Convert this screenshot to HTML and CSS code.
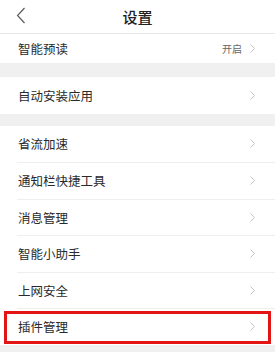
FILE: index.html
```html
<!DOCTYPE html>
<html lang="zh-CN">
<head>
    <meta charset="UTF-8">
    <meta name="viewport" content="width=device-width, initial-scale=1.0">
    <title>设置</title>
    <link rel="stylesheet" href="styles.css">
</head>
<body>

    <div class="topbar">
        <svg class="back" width="10" height="17" viewBox="0 0 10 17">
            <path d="M8.5 1 L1.5 8.5 L8.5 16" fill="none" stroke="#555" stroke-width="1.1"/>
        </svg>
        <span class="title">设置</span>
    </div>

    <div class="group first">
        <div class="row short">
            <span class="label">智能预读</span>
            <span class="value">开启</span>
            <svg class="arrow" width="5" height="9" viewBox="0 0 5 9"><path d="M0.5 0.5 L4.5 4.5 L0.5 8.5" fill="none" stroke="#c4c4c4" stroke-width="1"/></svg>
        </div>
    </div>

    <div class="group">
        <div class="row">
            <span class="label">自动安装应用</span>
            <svg class="arrow" width="5" height="9" viewBox="0 0 5 9"><path d="M0.5 0.5 L4.5 4.5 L0.5 8.5" fill="none" stroke="#c4c4c4" stroke-width="1"/></svg>
        </div>
    </div>

    <div class="group">
        <div class="row">
            <span class="label">省流加速</span>
            <svg class="arrow" width="5" height="9" viewBox="0 0 5 9"><path d="M0.5 0.5 L4.5 4.5 L0.5 8.5" fill="none" stroke="#c4c4c4" stroke-width="1"/></svg>
        </div>
        <div class="row">
            <span class="label">通知栏快捷工具</span>
            <svg class="arrow" width="5" height="9" viewBox="0 0 5 9"><path d="M0.5 0.5 L4.5 4.5 L0.5 8.5" fill="none" stroke="#c4c4c4" stroke-width="1"/></svg>
        </div>
        <div class="row">
            <span class="label">消息管理</span>
            <svg class="arrow" width="5" height="9" viewBox="0 0 5 9"><path d="M0.5 0.5 L4.5 4.5 L0.5 8.5" fill="none" stroke="#c4c4c4" stroke-width="1"/></svg>
        </div>
        <div class="row">
            <span class="label">智能小助手</span>
            <svg class="arrow" width="5" height="9" viewBox="0 0 5 9"><path d="M0.5 0.5 L4.5 4.5 L0.5 8.5" fill="none" stroke="#c4c4c4" stroke-width="1"/></svg>
        </div>
        <div class="row">
            <span class="label">上网安全</span>
            <svg class="arrow" width="5" height="9" viewBox="0 0 5 9"><path d="M0.5 0.5 L4.5 4.5 L0.5 8.5" fill="none" stroke="#c4c4c4" stroke-width="1"/></svg>
        </div>
        <div class="row highlight">
            <span class="label">插件管理</span>
            <svg class="arrow" width="5" height="9" viewBox="0 0 5 9"><path d="M0.5 0.5 L4.5 4.5 L0.5 8.5" fill="none" stroke="#c4c4c4" stroke-width="1"/></svg>
        </div>
    </div>

</body>
</html>
```

FILE: styles.css
```css
/* Page base */
body {
    margin: 0;
    background-color: #f0f0f0;
    font-family: "Noto Sans CJK SC", "Noto Sans", sans-serif;
    color: #2a2a2a;
}

.topbar {
    height: 33px;
    background-color: #ffffff;
    border-bottom: 1px solid #e8e8e8;
    display: flex;
    align-items: center;
    justify-content: center;
    position: relative;
}

.topbar .back {
    position: absolute;
    left: 16px;
    top: 7px;
}

.title {
    font-size: 15px;
    font-weight: 500;
    color: #222222;
}

.group {
    background-color: #ffffff;
    margin-top: 12px;
}

.group.first {
    margin-top: 0;
    margin-bottom: 14px;
}

.row {
    height: 36.5px;
    box-sizing: border-box;
    margin-left: 17px;
    padding: 0 20px 0 1px;
    display: flex;
    align-items: center;
    position: relative;
}

.row + .row {
    border-top: 1px solid #eeeeee;
}

.row.short {
    height: 29px;
}

.label {
    flex: 1;
    font-size: 12.5px;
}

.value {
    font-size: 10px;
    color: #666666;
    margin-right: 8px;
}

.arrow {
    display: block;
}

/* red annotation box around the last row */
.highlight::after {
    content: '';
    position: absolute;
    left: -13px;
    right: 4px;
    top: 1.5px;
    bottom: 1px;
    border: 3px solid #e31414;
}
```
